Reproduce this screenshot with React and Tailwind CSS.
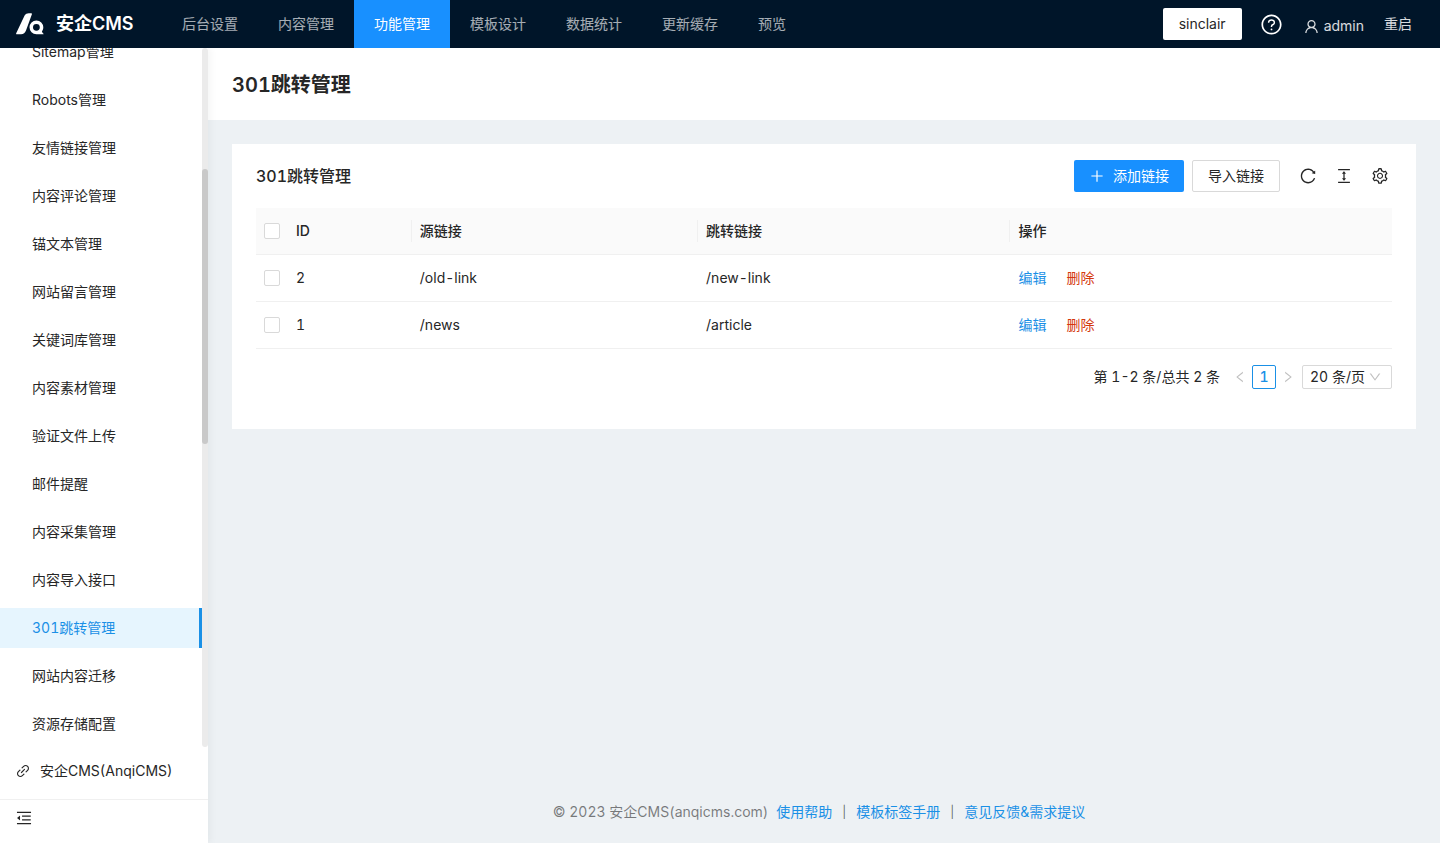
import React from 'react';
import {
  AiOutlineColumnHeight,
  AiOutlineDown,
  AiOutlineLeft,
  AiOutlineLink,
  AiOutlineMenuFold,
  AiOutlinePlus,
  AiOutlineQuestionCircle,
  AiOutlineReload,
  AiOutlineRight,
  AiOutlineSetting,
  AiOutlineUser,
} from 'react-icons/ai';

const topMenu = ['后台设置', '内容管理', '功能管理', '模板设计', '数据统计', '更新缓存', '预览'];

const sideMenu = [
  'Sitemap管理',
  'Robots管理',
  '友情链接管理',
  '内容评论管理',
  '锚文本管理',
  '网站留言管理',
  '关键词库管理',
  '内容素材管理',
  '验证文件上传',
  '邮件提醒',
  '内容采集管理',
  '内容导入接口',
  '301跳转管理',
  '网站内容迁移',
  '资源存储配置',
];

const redirects = [
  { id: 2, from: '/old-link', to: '/new-link' },
  { id: 1, from: '/news', to: '/article' },
];

const Logo = () => (
  <svg viewBox="0 0 28 22" className="w-7 h-[22px]" fill="#fff" aria-hidden="true">
    <path d="M8.600 2.600C9.600.9 11 .2 12.800.2h2.400c.6 0 .9.4.7 1L10 17.600C9.100 20 7.500 21.200 5 21.200H.8c-.6 0-.9-.4-.6-1Z" />
    <path
      fillRule="evenodd"
      d="M20.400 7.400a6.900 6.900 0 0 1 6.900 6.900c0 1.600-.5 3-1.400 4.200.3.900.8 1.600 1.600 2.200.3.300.2.500-.1.500h-7a6.900 6.900 0 0 1 0-13.800Zm0 3.500a3.400 3.400 0 1 0 0 6.800 3.400 3.400 0 0 0 0-6.800Z"
    />
  </svg>
);

const Header = () => (
  <header className="h-12 shrink-0 bg-[#001529] flex items-center pl-4 pr-7 relative z-10">
    <a href="#home" className="flex items-center gap-3 w-[146px] shrink-0 text-white text-lg font-semibold">
      <Logo />
      安企CMS
    </a>
    <nav className="flex flex-1 h-full">
      {topMenu.map((name) => (
        <a
          key={name}
          href="#menu"
          className={`h-full px-5 flex items-center whitespace-nowrap ${
            name === '功能管理' ? 'bg-[#1890ff] text-white' : 'text-white/65'
          }`}
        >
          {name}
        </a>
      ))}
    </nav>
    <div className="flex items-center text-white/85">
      <button className="h-8 px-4 mr-[18px] bg-white text-[#262626] rounded-xs">sinclair</button>
      <button aria-label="帮助" className="text-white mr-5">
        <AiOutlineQuestionCircle size={23} />
      </button>
      <button className="flex items-center gap-1 mr-5 pt-1">
        <AiOutlineUser size={17} />
        admin
      </button>
      <button>重启</button>
    </div>
  </header>
);

const Sidebar = () => (
  <aside className="w-52 shrink-0 relative bg-white flex flex-col shadow-[2px_0_8px_rgba(29,35,41,0.05)]">
    <div className="flex-1 min-h-0 flex overflow-hidden">
      <ul className="flex-1 -mt-5">
        {sideMenu.map((name) => (
          <li key={name} className="py-1">
            <a
              href="#side"
              className={`h-10 pl-8 flex items-center ${
                name === '301跳转管理' ? 'bg-[#e6f5fe] text-[#1a90e6] border-r-3 border-[#1a90e6]' : ''
              }`}
            >
              {name}
            </a>
          </li>
        ))}
      </ul>
      {/* Scrollbar */}
      <div className="w-1.5 bg-[#ebebeb] rounded-sm flex flex-col">
        <div className="basis-[17.3%] shrink-0" />
        <div className="basis-[39.4%] shrink-0 bg-[#c9c9c9] rounded-sm" />
      </div>
    </div>
    <a href="#anqicms" className="h-[52px] pl-[15px] pb-1 flex items-center gap-[9px]">
      <AiOutlineLink size={16} />
      安企CMS(AnqiCMS)
    </a>
    <div className="h-11 border-t border-[#f0f0f0] px-[15px] pb-2 flex items-center">
      <button aria-label="收起菜单">
        <AiOutlineMenuFold size={18} />
      </button>
    </div>
  </aside>
);

const Checkbox = ({ label }) => (
  <input
    type="checkbox"
    aria-label={label}
    className="appearance-none block w-4 h-4 bg-white border border-[#d9d9d9] rounded-xs"
  />
);

const RedirectTable = () => (
  <table className="w-full table-fixed text-left">
    <colgroup>
      <col className="w-8" />
      <col className="w-[10.9%]" />
      <col className="w-[25.2%]" />
      <col className="w-[27.5%]" />
      <col />
    </colgroup>
    <thead className="bg-[#fafafa]">
      <tr className="h-[46px] border-b border-[#f0f0f0]">
        <th className="px-2">
          <Checkbox label="全选" />
        </th>
        {['ID', '源链接', '跳转链接', '操作'].map((title) => (
          <th key={title} className="font-medium">
            <div
              className={`h-[22px] px-2 flex items-center ${
                title === '操作' ? '' : 'border-r border-[#f0f0f0]'
              }`}
            >
              {title}
            </div>
          </th>
        ))}
      </tr>
    </thead>
    <tbody>
      {redirects.map((item) => (
        <tr key={item.id} className="h-[47px] border-b border-[#f0f0f0]">
          <td className="px-2">
            <Checkbox label={`选择 ${item.id}`} />
          </td>
          <td className="px-2">{item.id}</td>
          <td className="px-2">{item.from}</td>
          <td className="px-2">{item.to}</td>
          <td className="px-2">
            <div className="flex gap-5">
              <a href="#edit" className="text-[#1a90e6]">编辑</a>
              <a href="#delete" className="text-[#d4380d]">删除</a>
            </div>
          </td>
        </tr>
      ))}
    </tbody>
  </table>
);

const Pagination = () => (
  <div className="mt-4 flex items-center justify-end h-6">
    <span className="mr-2">第 1-2 条/总共 2 条</span>
    <button aria-label="上一页" disabled className="w-6 h-6 flex items-center justify-center text-black/25">
      <AiOutlineLeft size={14} />
    </button>
    <button className="w-6 h-6 border border-[#1a90e6] rounded-xs text-[#1a90e6] font-medium flex items-center justify-center">
      1
    </button>
    <button aria-label="下一页" disabled className="w-6 h-6 flex items-center justify-center text-black/25">
      <AiOutlineRight size={14} />
    </button>
    <div className="relative ml-0.5">
      <select
        aria-label="每页条数"
        className="appearance-none block w-[90px] h-6 pl-[7px] bg-white border border-[#d9d9d9] rounded-xs leading-[22px]"
      >
        <option>20 条/页</option>
        <option>50 条/页</option>
      </select>
      <AiOutlineDown size={14} className="absolute right-2.5 top-[5px] text-black/25 pointer-events-none" />
    </div>
  </div>
);

const App = () => {
  return (
    <div className="h-screen flex flex-col text-sm leading-[22px] tabular-nums text-[#262626] font-['Inter','Noto_Sans_CJK_SC',sans-serif]">
      <Header />
      <div className="flex-1 min-h-0 flex">
        <Sidebar />
        <main className="flex-1 min-w-0 flex flex-col bg-[#edf1f4]">
          <div className="h-[72px] shrink-0 bg-white px-6 pt-0.5 flex items-center">
            <h1 className="text-xl font-semibold">301跳转管理</h1>
          </div>

          <section className="m-6 bg-white px-6 pb-10">
            <div className="h-16 flex items-center">
              <h2 className="flex-1 text-base font-medium">301跳转管理</h2>
              <button className="h-8 px-[15px] bg-[#1890ff] text-white rounded-xs flex items-center gap-2">
                <AiOutlinePlus size={16} />
                添加链接
              </button>
              <button className="h-8 px-[15px] ml-2 border border-[#d9d9d9] rounded-xs">导入链接</button>
              <div className="flex gap-[18px] ml-[19px] mr-[3px]">
                <button aria-label="刷新">
                  <AiOutlineReload size={18} />
                </button>
                <button aria-label="密度">
                  <AiOutlineColumnHeight size={18} />
                </button>
                <button aria-label="列设置">
                  <AiOutlineSetting size={18} />
                </button>
              </div>
            </div>
            <RedirectTable />
            <Pagination />
          </section>

          <footer className="mt-auto mb-5 pr-2.5 flex justify-center text-[#1a90e6]">
            <span className="text-black/50 mr-2">© 2023 安企CMS(anqicms.com)</span>
            <a href="#help">使用帮助</a>
            <span className="text-black/60 text-xs leading-[22px] mx-2.5">|</span>
            <a href="#manual">模板标签手册</a>
            <span className="text-black/60 text-xs leading-[22px] mx-2.5">|</span>
            <a href="#feedback">意见反馈&amp;需求提议</a>
          </footer>
        </main>
      </div>
    </div>
  );
};

export default App;
